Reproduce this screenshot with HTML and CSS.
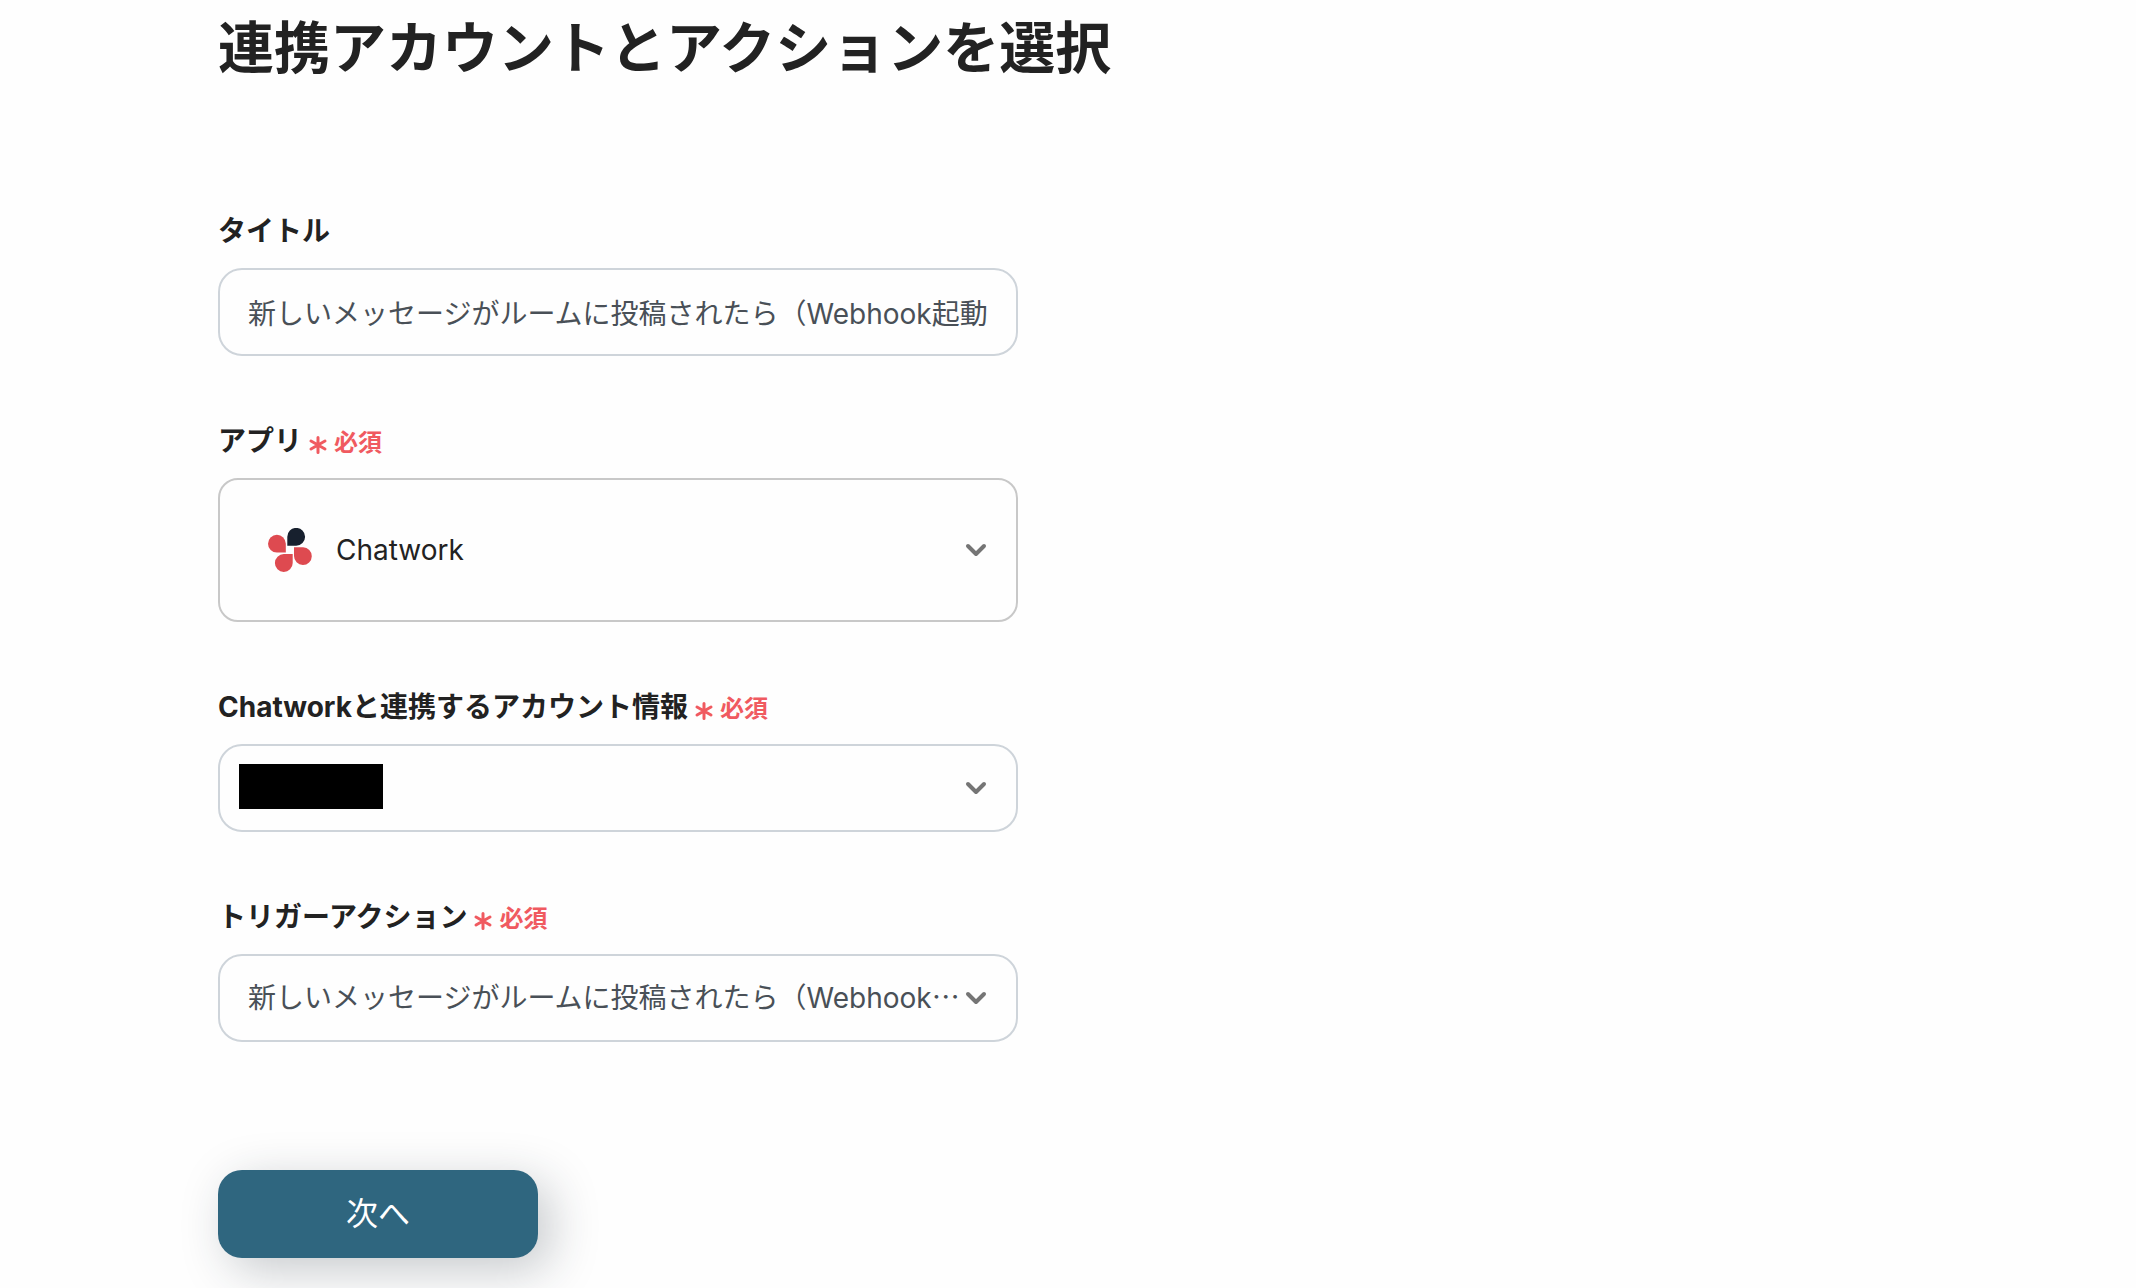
FILE: index.html
```
<!DOCTYPE html>
<html lang="ja">
<head>
  <meta charset="UTF-8" />
  <meta name="viewport" content="width=device-width, initial-scale=1.0"/>
  <title>連携アカウントとアクションを選択</title>
  <link rel="stylesheet" href="styles.css">
</head>
<body>

  <main>
    <h1>連携アカウントとアクションを選択</h1>

    <form>
      <div class="field">
        <label for="title">タイトル</label>
        <input type="text" id="title" class="control" value="新しいメッセージがルームに投稿されたら（Webhook起動）" />
      </div>

      <div class="field">
        <label for="app">アプリ
          <span class="required">
            <svg class="asterisk" viewBox="0 0 24 24" aria-hidden="true"><path d="M12 4.5v15M5 8l14 8M19 8l-14 8"/></svg>必須
          </span>
        </label>
        <div class="select-wrap">
          <select id="app" class="control app-select">
            <option>Chatwork</option>
          </select>
          <!-- Chatwork logo -->
          <svg class="app-logo" viewBox="0 0 44 44" aria-hidden="true">
            <path fill="#17202e" d="M19.3 17.7V8.9a8.9 8.9 0 1 1 8.9 8.8z"/>
            <path fill="#de4a50" d="M17.8 24.6V15.7A8.9 8.9 0 1 0 8.9 24.6z"/>
            <path fill="#de4a50" d="M26 19.2h9.1a8.9 8.9 0 1 1-9.1 8.9z"/>
            <path fill="#de4a50" d="M24.7 26.1h-8.8a8.9 8.9 0 1 0 8.8 8.9z"/>
          </svg>
          <svg class="chevron" viewBox="0 0 24 24" aria-hidden="true"><path d="M4 8l8 8 8-8"/></svg>
        </div>
      </div>

      <div class="field">
        <label for="account">Chatworkと連携するアカウント情報
          <span class="required">
            <svg class="asterisk" viewBox="0 0 24 24" aria-hidden="true"><path d="M12 4.5v15M5 8l14 8M19 8l-14 8"/></svg>必須
          </span>
        </label>
        <div class="select-wrap">
          <select id="account" class="control">
            <option></option>
          </select>
          <span class="mask"></span>
          <svg class="chevron" viewBox="0 0 24 24" aria-hidden="true"><path d="M4 8l8 8 8-8"/></svg>
        </div>
      </div>

      <div class="field">
        <label for="trigger">トリガーアクション
          <span class="required">
            <svg class="asterisk" viewBox="0 0 24 24" aria-hidden="true"><path d="M12 4.5v15M5 8l14 8M19 8l-14 8"/></svg>必須
          </span>
        </label>
        <div class="select-wrap">
          <select id="trigger" class="control">
            <option>新しいメッセージがルームに投稿されたら（Webhook⋯</option>
          </select>
          <svg class="chevron" viewBox="0 0 24 24" aria-hidden="true"><path d="M4 8l8 8 8-8"/></svg>
        </div>
      </div>

      <button type="button" class="next-button">次へ</button>
    </form>
  </main>

</body>
</html>
```

FILE: styles.css
```
* {
  box-sizing: border-box;
  font-family: Inter, "Noto Sans CJK JP", sans-serif;
}

body {
  margin: 0;
  min-height: 100vh;
  background: #fefefe;
  color: #222;
}

main {
  padding: 6px 24px 24px 218px;
}

h1 {
  margin: 0 0 120px;
  font-size: 56px;
  line-height: 84px;
  font-weight: bold;
}

form {
  max-width: 800px;
}

.field {
  margin-bottom: 64px;
}

.field label {
  display: flex;
  align-items: center;
  gap: 4px;
  margin-bottom: 16px;
  font-size: 28px;
  line-height: 42px;
  font-weight: bold;
}

.required {
  display: flex;
  align-items: center;
  gap: 4px;
  padding-top: 4px;
  color: #f05a60;
  font-size: 24px;
  line-height: 36px;
}

.asterisk {
  width: 24px;
  height: 24px;
  margin-top: 4px;
  fill: none;
  stroke: #f05a60;
  stroke-width: 3;
  stroke-linecap: round;
}

.control {
  display: block;
  width: 100%;
  height: 88px;
  padding: 0 28px;
  border: 2px solid #ced4da;
  border-radius: 24px;
  background: #fefefe;
  color: #495057;
  font-size: 28px;
  line-height: 42px;
  appearance: none;
}

.select-wrap {
  position: relative;
}

.app-select {
  height: 144px;
  padding-left: 116px;
  border-color: #c8c8c8;
  border-radius: 20px;
  color: #222;
}

.app-logo {
  position: absolute;
  top: 50px;
  left: 50px;
  width: 44px;
  height: 44px;
  pointer-events: none;
}

.chevron {
  position: absolute;
  top: 50%;
  right: 30px;
  width: 24px;
  height: 24px;
  margin-top: -12px;
  fill: none;
  stroke: #757575;
  stroke-width: 4;
  stroke-linecap: round;
  stroke-linejoin: round;
  pointer-events: none;
}

.mask {
  position: absolute;
  top: 20px;
  left: 21px;
  width: 144px;
  height: 45px;
  background: #000;
}

.next-button {
  display: block;
  width: 320px;
  height: 88px;
  margin-top: 128px;
  padding: 0 0 6px;
  border: none;
  border-radius: 24px;
  background: #2f667f;
  box-shadow: 12px 12px 48px rgba(33, 45, 56, 0.25);
  color: #fff;
  font-size: 32px;
  cursor: pointer;
}
```
